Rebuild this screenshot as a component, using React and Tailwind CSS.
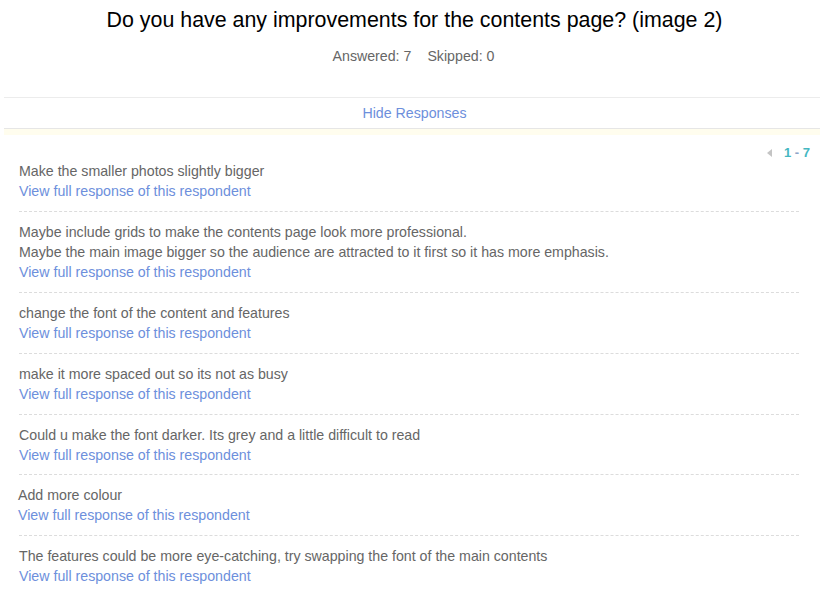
import React from 'react';

const responses = [
  ['Make the smaller photos slightly bigger'],
  [
    'Maybe include grids to make the contents page look more professional.',
    'Maybe the main image bigger so the audience are attracted to it first so it has more emphasis.',
  ],
  ['change the font of the content and features'],
  ['make it more spaced out so its not as busy'],
  ['Could u make the font darker. Its grey and a little difficult to read'],
  ['Add more colour'],
  ['The features could be more eye-catching, try swapping the font of the main contents'],
];

export default function App() {
  return (
    <div className="min-h-[594px] bg-white font-['Liberation_Sans',Arial,sans-serif] text-[#666]">
      {/* question header */}
      <div className="pl-1 pr-px">
        <h1 className="pl-[5px] pt-[7px] text-center text-[21.4px] leading-[26px] text-black">
          Do you have any improvements for the contents page? (image 2)
        </h1>
        <div className="mt-[13px] flex justify-center gap-4 pl-[3px] text-[14.2px] leading-5 text-[#666]">
          <span>Answered: 7</span>
          <span>Skipped: 0</span>
        </div>

        <div className="mt-[31px] border-t border-[#ececec] py-[5px] pl-[5px] text-center text-[14.2px] leading-5">
          <a href="#" className="text-[#6d8fdc]">Hide Responses</a>
        </div>
        <div className="border-t border-[#e6e6e6]" />
        <div className="h-[6px] bg-[#fffdee]" />
      </div>

      {/* responses */}
      <div className="pl-[19px] pr-[22px] pt-[10px]">
        <div className="-mr-[11px] flex h-4 items-center justify-end gap-3 text-[13px] font-bold leading-4">
          <svg width="5" height="8" viewBox="0 0 5 8">
            <path d="M5 0 L0 4 L5 8 Z" fill="#c4c4c4" />
          </svg>
          <span>
            <span className="text-[#45b7c1]">1</span>
            <span className="text-[#8ea5c8]"> - </span>
            <span className="text-[#45b7c1]">7</span>
          </span>
        </div>
        <div>
          {responses.map((lines, i) => (
            <div
              key={i}
              className={`py-[10px] text-[14.2px] leading-5 ${i < responses.length - 1 ? 'border-b border-dashed border-[#dcdcdc]' : ''} ${i === 0 ? 'pt-0' : ''} ${i === 4 ? 'pb-[9px]' : ''}`}
            >
              {lines.map((l, j) => (
                <div key={j} className={i === 5 ? '-ml-px' : ''}>{l}</div>
              ))}
              <a href="#" className={`block text-[#6d8fdc] ${i === 5 ? '-ml-px' : ''}`}>
                View full response of this respondent
              </a>
            </div>
          ))}
        </div>
      </div>
    </div>
  );
}
